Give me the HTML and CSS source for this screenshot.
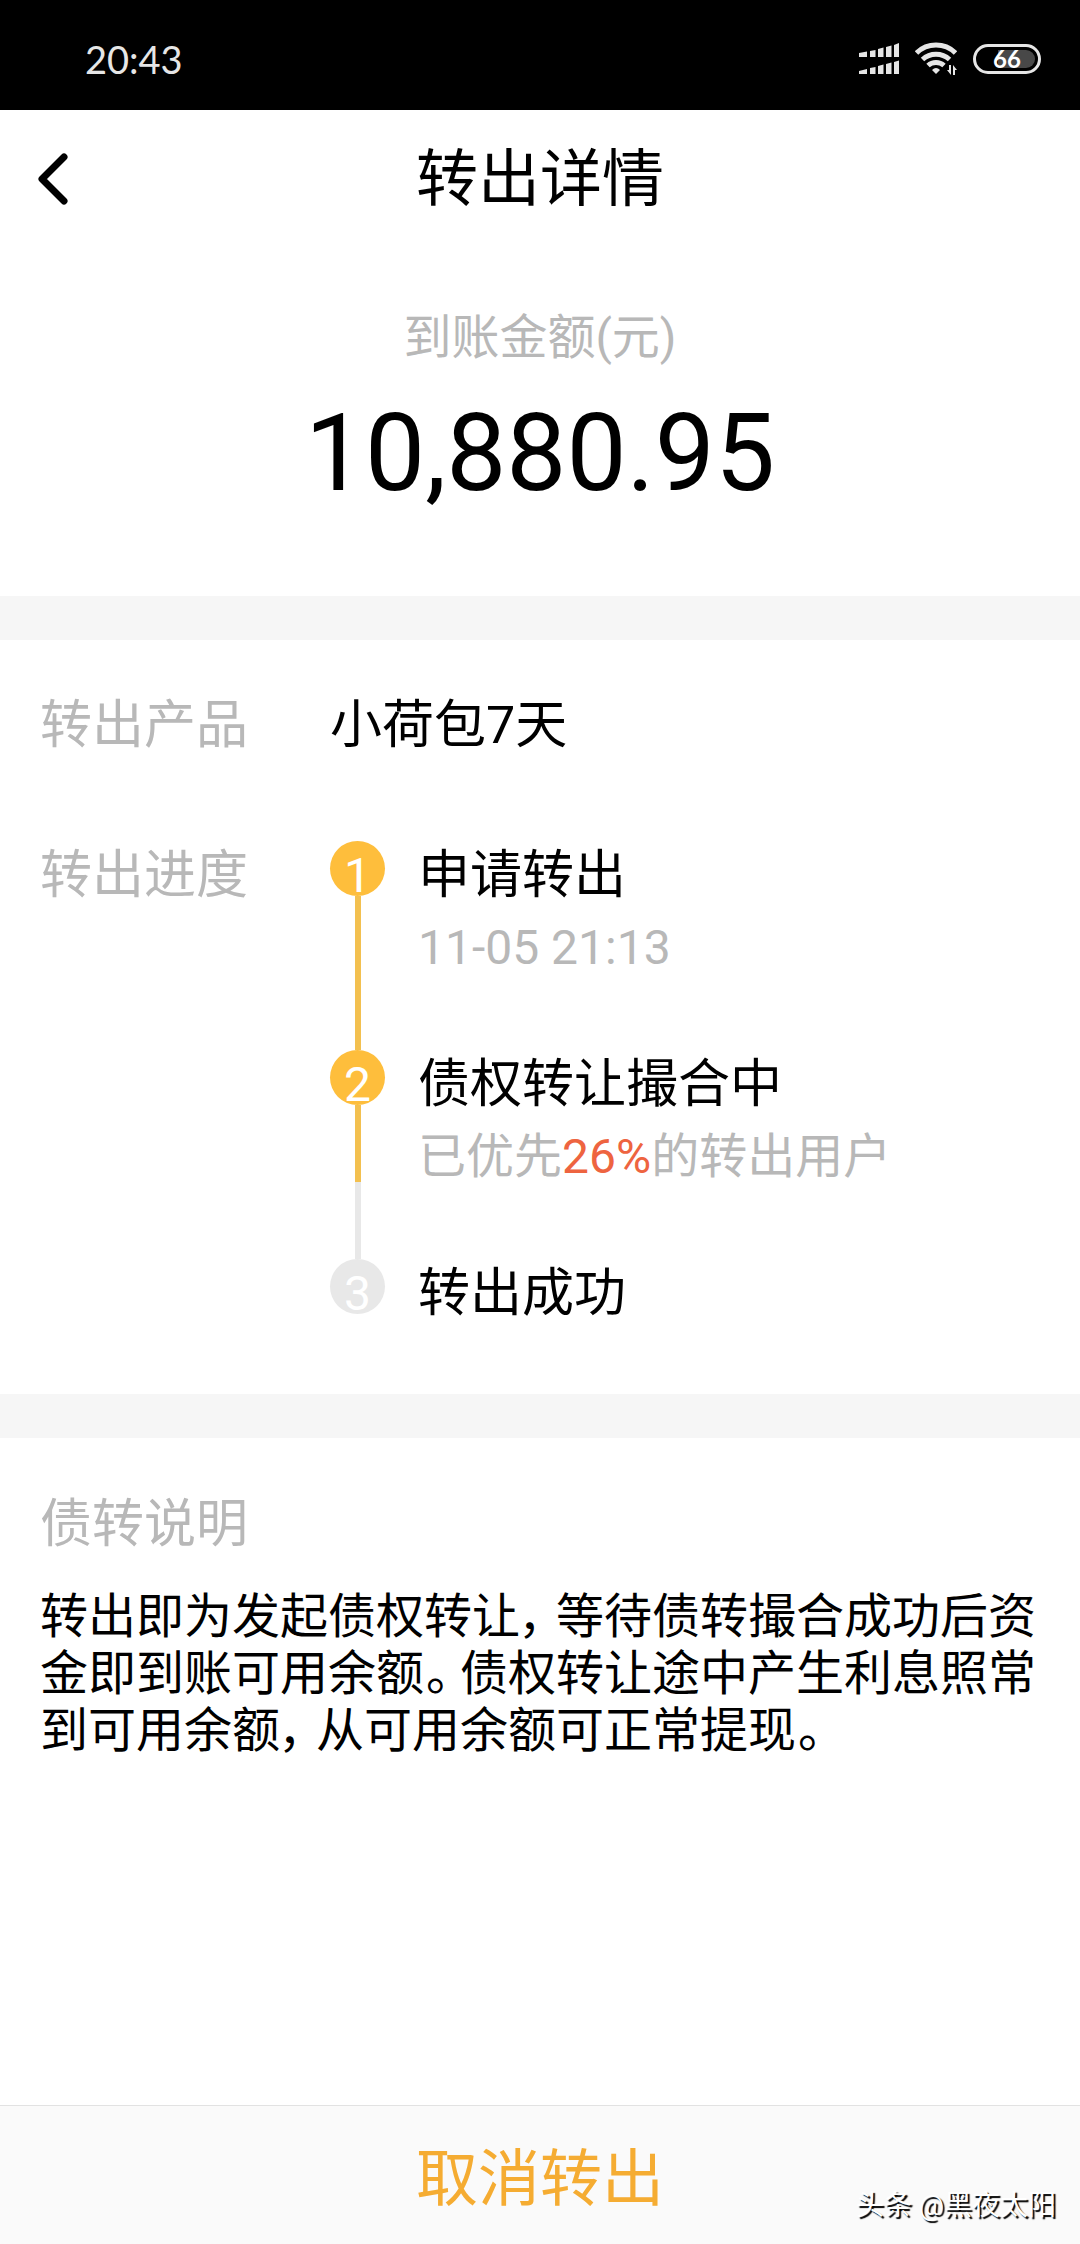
FILE: index.html
```html
<!DOCTYPE html>
<html lang="zh-CN">
<head>
<meta charset="utf-8">
<meta name="viewport" content="width=device-width, initial-scale=1">
<title>转出详情</title>
<link rel="stylesheet" href="styles.css">
</head>
<body>
<div class="page">
  <div class="status-bar">
    <time class="clock">20:43</time>
    <div class="status-icons">
      <svg class="icon-signal" viewBox="0 0 40 32" aria-hidden="true">
        <path d="M0 10l8-1.500v5.500H0zM11 8l5.500-1v7H11zM19 6l5.500-1.500V14H19zM27 4l5.500-1.500V14H27zM35 2l5-2v14h-5z"/>
        <path d="M0 28l8-2v5H0zM11 25l5.500-1v7H11zM19 23l5.500-1.500V31H19zM27 21l5.500-1.500V31H27zM35 19l5-1.500V31h-5z"/>
      </svg>
      <svg class="icon-wifi" viewBox="0 0 42 34" aria-hidden="true">
        <g fill="none" stroke="#e6e6e6" stroke-width="5">
          <path d="M1.500 11a28 28 0 0 1 39 0"/>
          <path d="M7.500 17.500a20 20 0 0 1 27 0"/>
          <path d="M13 23.500a12 12 0 0 1 16 0"/>
        </g>
        <path d="M17 28q4-4 8 0l-4 4z"/>
        <path d="M36 23v10l-4-5h2v-5zM38 33V23l4 5h-2v5z"/>
      </svg>
      <div class="battery"><span class="battery-level">66</span></div>
    </div>
  </div>

  <header class="nav">
    <button class="back" type="button" aria-label="返回">
      <svg class="icon-back" viewBox="0 0 30 52" aria-hidden="true"><path d="M26 4L4 26l22 22"/></svg>
    </button>
    <h1 class="nav-title">转出详情</h1>
  </header>

  <main class="content">
    <section class="summary">
      <p class="caption">到账金额(元)</p>
      <p class="amount">10,880.95</p>
    </section>

    <section class="details">
      <h2 class="label">转出产品</h2>
      <p class="value">小荷包7天</p>
      <h2 class="label">转出进度</h2>
      <ol class="steps">
        <li class="step step-done">
          <div class="track"><span class="dot">1</span></div>
          <div class="step-body">
            <h3 class="step-title">申请转出</h3>
            <p class="step-note">11-05 21:13</p>
          </div>
        </li>
        <li class="step step-current">
          <div class="track"><span class="dot">2</span></div>
          <div class="step-body">
            <h3 class="step-title">债权转让撮合中</h3>
            <p class="step-note">已优先<em class="percent">26%</em>的转出用户</p>
          </div>
        </li>
        <li class="step step-pending">
          <div class="track"><span class="dot">3</span></div>
          <div class="step-body">
            <h3 class="step-title">转出成功</h3>
          </div>
        </li>
      </ol>
    </section>

    <section class="notes">
      <h2 class="label">债转说明</h2>
      <p class="notes-text">转出即为发起债权转让<span class="comma">，</span>等待债转撮合成功后资金即到账可用余额<span class="stop">。</span>债权转让途中产生利息照常到可用余额<span class="comma">，</span>从可用余额可正常提现<span class="stop">。</span></p>
    </section>
  </main>

  <footer class="footer">
    <button class="cancel" type="button">取消转出</button>
    <span class="watermark">头条 @黑夜太阳</span>
  </footer>
</div>
</body>
</html>
```

FILE: styles.css
```css
* {
  box-sizing: border-box;
  margin: 0;
  padding: 0;
}

body {
  background: #fff;
  color: #000;
  font-family: Roboto, "Noto Sans CJK SC", sans-serif;
  font-size: 48px;
}

h1, h2, h3 {
  font-weight: 400;
}

button {
  border: 0;
  background: none;
  font: inherit;
}

.page {
  display: flex;
  flex-direction: column;
  min-height: 100vh;
}

/* Status bar */
.status-bar {
  display: flex;
  align-items: center;
  justify-content: space-between;
  height: 110px;
  padding: 8px 39px 0 85px;
  background: #000;
  color: #e6e6e6;
}

.clock {
  font-family: Lato, sans-serif;
  font-size: 38px;
}

.status-icons {
  display: flex;
  align-items: center;
  gap: 16px;
}

.icon-signal {
  width: 40px;
  height: 32px;
  fill: #e6e6e6;
}

.icon-wifi {
  width: 42px;
  height: 34px;
  fill: #e6e6e6;
}

.battery {
  width: 68px;
  height: 30px;
  padding: 3px;
  border: 3px solid #e6e6e6;
  border-radius: 15px;
}

.battery-level {
  display: block;
  border-radius: 9px;
  background: linear-gradient(90deg, #000 34%, #484848 34%);
  color: #fff;
  font-family: Lato, sans-serif;
  font-size: 24px;
  font-weight: 700;
  line-height: 18px;
  text-align: center;
}

/* Title bar */
.nav {
  display: grid;
  grid-template-columns: 100px 1fr 100px;
  align-items: center;
  height: 138px;
}

.back {
  display: flex;
  padding: 20px 0 20px 38px;
}

.icon-back {
  width: 30px;
  height: 52px;
  fill: none;
  stroke: #000;
  stroke-width: 7;
  stroke-linecap: round;
  stroke-linejoin: round;
}

.nav-title {
  padding-top: 2px;
  font-size: 62px;
  line-height: 74px;
  text-align: center;
}

/* Amount */
.summary {
  padding: 62px 40px 82px;
  border-bottom: 44px solid #f6f6f6;
  text-align: center;
}

.caption {
  margin-bottom: 28px;
  color: #b8b8b8;
  line-height: 56px;
}

.amount {
  font-size: 107px;
  line-height: 120px;
}

/* Product and progress */
.details {
  display: grid;
  grid-template-columns: 290px 1fr;
  row-gap: 85px;
  padding: 51px 40px 70px;
  border-bottom: 44px solid #f6f6f6;
}

.label,
.value,
.step-title {
  font-size: 52px;
  line-height: 60px;
}

.label {
  color: #b8b8b8;
}

.details > .label,
.value {
  padding-top: 5px;
}

.steps {
  list-style: none;
}

.step {
  display: flex;
  gap: 33px;
}

.track {
  display: flex;
  flex-direction: column;
  align-items: center;
  width: 55px;
}

.dot {
  width: 55px;
  height: 55px;
  padding-top: 15px;
  border-radius: 50%;
  background: #febe3c;
  color: #fff;
  line-height: 40px;
  text-align: center;
}

.step-pending .dot {
  background: #e8e8e8;
}

.step-done .track::after,
.step-current .track::after {
  flex: 1;
  width: 6px;
  background: #f3c04f;
  content: "";
}

.step-current .track::after {
  background: linear-gradient(#f3c04f 50%, #e8e8e8 50%);
}

.step-body {
  padding: 5px 0 74px;
}

.step:last-child .step-body {
  padding-bottom: 0;
}

.step-note {
  margin-top: 14px;
  color: #b8b8b8;
  line-height: 56px;
}

.percent {
  color: #ee6440;
  font-style: normal;
}

/* Explanation */
.notes {
  padding: 57px 40px;
}

.notes-text {
  margin-top: 33px;
  line-height: 57px;
}

/* Narrow punctuation: half-width glyph plus a quarter em of air */
.comma,
.stop {
  margin-right: 14px;
  margin-left: -2px;
  font-feature-settings: "halt";
}

.stop {
  margin-right: 10px;
  margin-left: 2px;
}

/* Bottom action */
.footer {
  position: relative;
  margin-top: auto;
  border-top: 1px solid #e2e2e2;
  background: #fafafa;
}

.cancel {
  display: block;
  width: 100%;
  padding: 37px 0 27px;
  color: #f5ac32;
  font-size: 62px;
  line-height: 74px;
}

.watermark {
  position: absolute;
  right: 24px;
  bottom: 21px;
  color: #fff;
  font-size: 28px;
  line-height: 34px;
  text-shadow: 2px 2px 1px #000;
}
```
